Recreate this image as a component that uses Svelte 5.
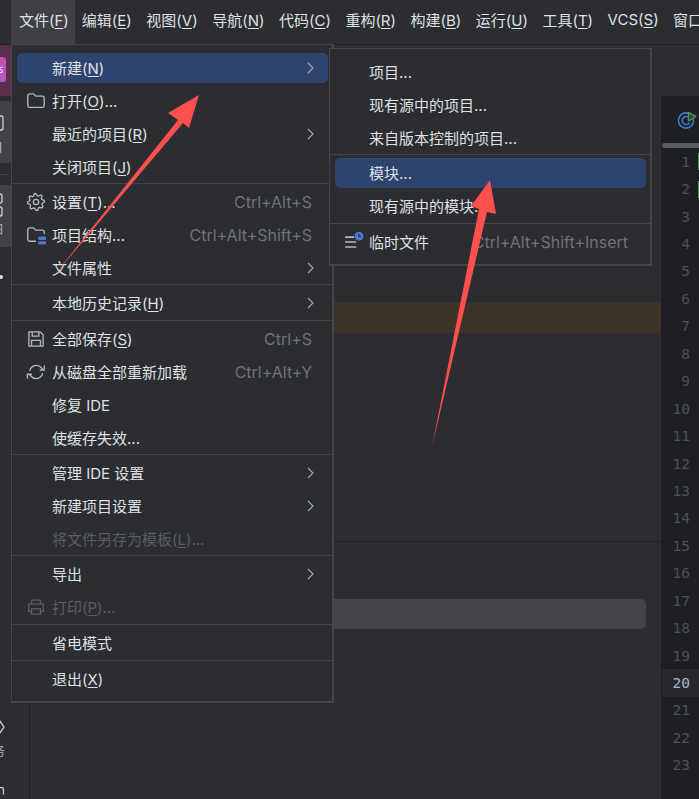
<script>
  const topMenu = ['文件(_F)', '编辑(_E)', '视图(_V)', '导航(_N)', '代码(_C)', '重构(_R)', '构建(_B)', '运行(_U)', '工具(_T)', 'VCS(_S)', '窗口(_W)'];

  const fileMenu = [
    { t: '新建(_N)', sub: true, active: true },
    { t: '打开(_O)...', icon: 'folder' },
    { t: '最近的项目(_R)', sub: true },
    { t: '关闭项目(_J)' },
    { sep: 1 },
    { t: '设置(_T)...', icon: 'gear', key: 'Ctrl+Alt+S' },
    { t: '项目结构...', icon: 'structure', key: 'Ctrl+Alt+Shift+S' },
    { t: '文件属性', sub: true },
    { sep: 1 },
    { t: '本地历史记录(_H)', sub: true },
    { sep: 2 },
    { t: '全部保存(_S)', icon: 'save', key: 'Ctrl+S' },
    { t: '从磁盘全部重新加载', icon: 'reload', key: 'Ctrl+Alt+Y' },
    { t: '修复 IDE' },
    { t: '使缓存失效...' },
    { sep: 1 },
    { t: '管理 IDE 设置', sub: true },
    { t: '新建项目设置', sub: true },
    { t: '将文件另存为模板(_L)...', off: true },
    { sep: 1 },
    { t: '导出', sub: true },
    { t: '打印(_P)...', icon: 'print', off: true },
    { sep: 2 },
    { t: '省电模式' },
    { sep: 2 },
    { t: '退出(_X)' }
  ];

  const newMenu = [
    { t: '项目...' },
    { t: '现有源中的项目...' },
    { t: '来自版本控制的项目...' },
    { sep: 1 },
    { t: '模块...', active: true },
    { t: '现有源中的模块...' },
    { sep: 2 },
    { t: '临时文件', icon: 'scratch', key: 'Ctrl+Alt+Shift+Insert' }
  ];

  const lines = Array.from({ length: 23 }, (_, i) => i + 1);

  function parts(label) {
    const i = label.indexOf('_');
    if (i < 0) return [label, '', ''];
    return [label.slice(0, i), label[i + 1], label.slice(i + 2)];
  }

  function gearPath() {
    const cx = 9, cy = 9, teeth = 8;
    let d = '';
    for (let i = 0; i < teeth * 4; i++) {
      const a = (i / (teeth * 4)) * Math.PI * 2 - Math.PI / 16;
      const r = i % 4 < 2 ? 7.6 : 5.8;
      d += (i ? 'L' : 'M') + (cx + r * Math.cos(a)).toFixed(2) + ' ' + (cy + r * Math.sin(a)).toFixed(2);
    }
    return d + 'Z';
  }
</script>

{#snippet icon(name)}
  <svg class="ico" viewBox="0 0 18 18" width="20" height="20" fill="none" stroke="currentColor" stroke-width="1.2">
    {#if name === 'folder'}
      <path d="M1.6 4.2a1.6 1.6 0 0 1 1.6-1.6h3.6l2 2h6a1.6 1.6 0 0 1 1.6 1.6v7a1.6 1.6 0 0 1-1.6 1.6H3.2a1.6 1.6 0 0 1-1.6-1.6z" />
    {:else if name === 'gear'}
      <path d={gearPath()} stroke-linejoin="round" />
      <circle cx="9" cy="9" r="2.4" />
    {:else if name === 'structure'}
      <path d="M9 14.6H3.2a1.6 1.6 0 0 1-1.6-1.6V4.2a1.6 1.6 0 0 1 1.6-1.6h3.6l2 2h6a1.6 1.6 0 0 1 1.6 1.6v2" />
      <rect x="11" y="10.4" width="7" height="3" rx=".6" fill="#4d78cc" stroke="none" />
      <rect x="11" y="14.6" width="7" height="3" rx=".6" fill="#4d78cc" stroke="none" />
    {:else if name === 'save'}
      <path d="M2.6 2.6h10.2l2.6 2.6v10.2H2.6z" stroke-linejoin="round" />
      <path d="M5.6 2.8v3.6h6V2.8M5 15.2v-5h8v5" />
    {:else if name === 'reload'}
      <path d="M3.4 8a6 6 0 0 1 10.6-2.6l1.2 1.4" />
      <path d="M16.4 3.6v3.6h-3.6" stroke-linecap="round" />
      <path d="M15 10a6 6 0 0 1-10.6 2.6L3 11.2" />
      <path d="M1.2 14.4v-3.4h3.6" stroke-linecap="round" />
    {:else if name === 'print'}
      <path d="M5 6V2.8h8V6M5 13H2.4V6.4h13.2V13H13" stroke-linejoin="round" />
      <rect x="5" y="10.6" width="8" height="4.8" />
    {:else if name === 'scratch'}
      <path d="M1 4.6h8M1 9h10M1 13.5h10" stroke-width="1.4" />
      <circle cx="13.5" cy="3.8" r="4" fill="#4d78cc" stroke="none" />
      <path d="M13.5 1.6v2.4h1.8" stroke="#1f2a44" stroke-width="1" />
    {/if}
  </svg>
{/snippet}

{#snippet label(text)}
  {@const p = parts(text)}
  <span class="text">{p[0]}{#if p[1]}<u>{p[1]}</u>{/if}{p[2]}</span>
{/snippet}

{#snippet entries(items)}
  {#each items as item}
    {#if item.sep}
      <div class="sep" class:wide={item.sep === 2}></div>
    {:else}
      <div class="row" class:active={item.active} class:off={item.off}>
        <span class="slot">{#if item.icon}{@render icon(item.icon)}{/if}</span>
        {@render label(item.t)}
        {#if item.key}<span class="key">{item.key}</span>{/if}
        {#if item.sub}
          <svg class="chev" viewBox="0 0 7 12" width="7" height="12" fill="none" stroke="currentColor" stroke-width="1.1"><path d="M1 1l5 5-5 5" /></svg>
        {/if}
      </div>
    {/if}
  {/each}
{/snippet}

<div class="app">
  <header class="menubar">
    {#each topMenu as m, i}
      <div class="top" class:open={i === 0}>{@render label(m)}</div>
    {/each}
  </header>

  <div class="body">
    <aside class="rail">
      <div class="strip">
        <div class="brand">
          <svg viewBox="0 0 11 26" width="11" height="26">
            <defs>
              <linearGradient id="pk" x1="0" y1="0" x2="0" y2="1">
                <stop offset="0" stop-color="#c04fb4" />
                <stop offset="1" stop-color="#b35ac8" />
              </linearGradient>
            </defs>
            <rect x="-12" y="0" width="18" height="25" rx="3.5" fill="url(#pk)" />
            <path d="M2.4 10.6c-1.6-.7-2.6 0-2.6 1.1s2.6 1.2 2.6 2.6-1.4 1.7-2.8 1" stroke="#f2e3f2" stroke-width="1.1" fill="none" />
          </svg>
        </div>
        <div class="tool first">
          <svg viewBox="0 0 11 16" width="11" height="16" fill="none" stroke="#ced0d6" stroke-width="1.3"><rect x="-8" y="1" width="11" height="14" rx="2" /></svg>
          <span class="tool-label">项目</span>
        </div>
        <div class="divider"><i></i></div>
        <div class="tool second">
          <svg viewBox="0 0 11 24" width="11" height="24" fill="none" stroke="#ced0d6" stroke-width="1.3"><rect x="-6" y="1" width="8" height="9" rx="2" /><rect x="-6" y="14" width="8" height="9" rx="2" /></svg>
          <span class="tool-label">结构图</span>
        </div>
        <div class="dot"></div>
        <div class="lower">
          <svg viewBox="0 0 11 16" width="11" height="16" fill="none" stroke="#ced0d6" stroke-width="1.3"><path d="M-1 .8L4 8l-5 7.2" /></svg>
          <span class="tool-label service">服务</span>
          <svg class="clip" viewBox="0 0 11 8" width="11" height="8" fill="none" stroke="#ced0d6" stroke-width="1.3"><path d="M-5 7.5V2a1.4 1.4 0 0 1 1.4-1.4H2A1.4 1.4 0 0 1 3.4 2v5.5" /></svg>
        </div>
      </div>
    </aside>

    <main class="panel">
      <div class="tree">
        <div class="current"></div>
      </div>
      <div class="bottom">
        <div class="field"></div>
      </div>
    </main>

    <section class="editor">
      <div class="tabs">
        <svg viewBox="0 0 22 22" width="22" height="22" fill="none">
          <circle cx="10" cy="11.5" r="7.6" stroke="#4375d6" stroke-width="1.6" />
          <path d="M13.4 9a4 4 0 1 0 .3 4.6" stroke="#4375d6" stroke-width="1.6" />
          <path d="M12.4 3.4l7.6 4.2-7.6 4.4z" fill="#2b4a33" stroke="#57965c" stroke-width="1.2" stroke-linejoin="round" />
        </svg>
      </div>
      <div class="thumb"></div>
      <div class="gutter">
        {#each lines as n}
          <div class="ln" class:now={n === 20}>
            <span class="num">{n}</span>
            <span class="mark" class:changed={n < 3}></span>
          </div>
        {/each}
      </div>
    </section>
  </div>

  <div class="menu file">{@render entries(fileMenu)}</div>
  <div class="menu new">{@render entries(newMenu)}</div>

  <svg class="marks" viewBox="0 0 699 799" width="699" height="799">
    <path d="M52 278L178 120 168 113 199 95 189 128 183 123Z" fill="#ff5050" />
    <path d="M432 447L479 209 471 206 490 180 496 214 487 212Z" fill="#ff5050" />
  </svg>
</div>

<style>
  :global(body) {
    margin: 0;
    background: #2b2d30;
  }

  .app {
    position: relative;
    width: 699px;
    height: 799px;
    overflow: hidden;
    display: flex;
    flex-direction: column;
    background: #2b2d30;
    color: #dfe1e5;
    font-family: Inter, "Noto Sans CJK SC", sans-serif;
    font-size: 15px;
  }

  u {
    text-underline-offset: 2px;
    text-decoration-thickness: 1px;
  }

  .menubar {
    flex: none;
    height: 44px;
    display: flex;
    padding-left: 11px;
    border-bottom: 1px solid #1e1f22;
    overflow: hidden;
  }

  .top {
    flex: none;
    display: flex;
    align-items: center;
    padding: 0 7.25px 6px;
    white-space: nowrap;
  }

  .top:first-child {
    padding-left: 8px;
    padding-right: 6px;
  }

  .top:nth-child(2) {
    padding-left: 7px;
  }

  .top.open {
    background: #3e4044;
  }

  .body {
    flex: 1;
    display: flex;
    min-height: 0;
  }

  .rail {
    flex: none;
    width: 29px;
    border-right: 1px solid #1e1f22;
  }

  .strip {
    width: 11px;
    display: flex;
    flex-direction: column;
    overflow: hidden;
  }

  .brand {
    height: 51px;
    background: #5b2f4d;
    padding-top: 12px;
    box-sizing: border-box;
  }

  .brand svg,
  .tool svg,
  .lower svg {
    display: block;
  }

  .tool {
    background: #404246;
    box-sizing: border-box;
  }

  .first {
    margin-top: 5px;
    height: 62px;
    padding-top: 14px;
  }

  .second {
    height: 62px;
    padding-top: 8px;
  }

  .divider {
    height: 22px;
    display: flex;
    align-items: center;
  }

  .divider i {
    width: 7px;
    height: 1px;
    background: #43454a;
  }

  .tool-label {
    display: flex;
    justify-content: flex-end;
    padding-right: 8px;
    width: 11px;
    box-sizing: border-box;
    font-size: 12px;
    line-height: 16px;
    color: #b4b8bf;
    white-space: nowrap;
    margin-top: 9px;
  }

  .second .tool-label {
    margin-top: 5px;
  }

  .dot {
    width: 4px;
    height: 4px;
    margin: 28px 0 0 -1px;
    border-radius: 50%;
    background: #dfe1e5;
  }

  .lower {
    margin-top: 440px;
  }

  .service {
    padding-right: 6px;
    margin-top: 9px;
  }

  .clip {
    margin-top: 27px;
  }

  .panel {
    flex: 1;
    min-width: 0;
    display: flex;
    flex-direction: column;
  }

  .tree {
    height: 496px;
    padding-top: 257px;
    box-sizing: border-box;
  }

  .current {
    height: 31px;
    background: #3f3226;
  }

  .bottom {
    flex: 1;
    border-top: 1px solid #1e1f22;
    padding: 57px 15px 0 0;
  }

  .field {
    height: 30px;
    border-radius: 5px;
    background: #43454a;
  }

  .editor {
    flex: none;
    width: 38px;
    margin-top: 51px;
    background: #1e1f22;
    display: flex;
    flex-direction: column;
    overflow: hidden;
  }

  .tabs {
    flex: none;
    height: 47px;
    box-sizing: border-box;
    padding: 13px 0 0 15px;
  }

  .tabs svg {
    display: block;
  }

  .thumb {
    flex: none;
    height: 5px;
    margin-left: 1px;
    border-radius: 3px 0 0 3px;
    background: #5a5d63;
  }

  .gutter {
    font-family: "DejaVu Sans Mono", monospace;
    font-size: 14.5px;
    color: #4b5059;
  }

  .ln {
    height: 27.45px;
    margin-left: 1px;
    display: flex;
    align-items: center;
    justify-content: flex-end;
  }

  .ln.now {
    background: #26282e;
    color: #a9b7c6;
  }

  .num {
    margin-right: 8px;
  }

  .mark {
    width: 1px;
    height: 17px;
  }

  .mark.changed {
    background: #4f8a56;
  }

  .menu {
    position: absolute;
    box-sizing: border-box;
    width: 323px;
    display: flex;
    flex-direction: column;
    padding: 6px 0;
    background: #2b2d30;
    border: solid #43454a;
    border-width: 1px 2px 2px 1px;
  }

  .file {
    left: 11px;
    top: 44px;
  }

  .new {
    left: 329px;
    top: 48px;
  }

  .row {
    flex: none;
    height: 30px;
    margin: 2px 4px 1px 5px;
    padding: 0 14px 0 9px;
    display: flex;
    align-items: center;
    border-radius: 5px;
    white-space: nowrap;
  }

  .row.active {
    background: #2e436e;
  }

  .row.off {
    color: #5a5d63;
  }

  .slot {
    flex: none;
    width: 26px;
    height: 20px;
    color: #b4b8bf;
  }

  .row.off .slot {
    color: #5a5d63;
  }

  .new .slot {
    width: 25px;
  }

  .ico {
    display: block;
    overflow: visible;
  }

  .text {
    flex: none;
    margin-bottom: 2px;
  }

  .top .text {
    margin-bottom: 0;
  }

  .key {
    margin-left: auto;
    margin-right: 2px;
    font-size: 16px;
    color: #6f737a;
  }

  .new .key {
    margin-right: 4px;
  }

  .chev {
    margin-left: auto;
    color: #a8abb0;
  }

  .sep {
    flex: none;
    height: 1px;
    margin-bottom: 1px;
    background: #43454a;
  }

  .sep.wide {
    margin-top: 1px;
  }

  .marks {
    position: absolute;
    left: 0;
    top: 0;
    pointer-events: none;
  }
</style>
